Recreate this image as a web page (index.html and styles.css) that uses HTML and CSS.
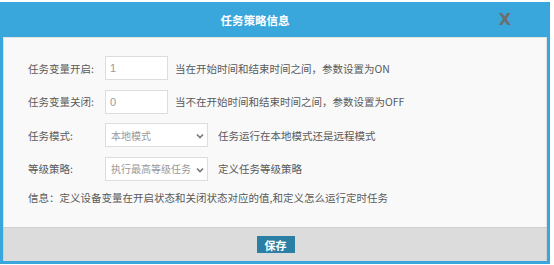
FILE: index.html
```html
<!doctype html>
<html>
    <head>
        <meta charset="utf-8">
        <meta name="viewport" content="width=device-width,initial-scale=1">
        <title>任务策略信息</title>
        <link rel="stylesheet" href="styles.css">
    </head>
    <body>
        <div class="dialog">
            <div class="dialog-head">
                <span class="dialog-title">任务策略信息</span>
                <span class="dialog-close">X</span>
            </div>
            <div class="dialog-body">
                <div class="form-row">
                    <label for="var-on">任务变量开启:</label>
                    <input type="text" id="var-on" class="field" value="1">
                    <span class="hint">当在开始时间和结束时间之间，参数设置为ON</span>
                </div>
                <div class="form-row">
                    <label for="var-off">任务变量关闭:</label>
                    <input type="text" id="var-off" class="field" value="0">
                    <span class="hint">当不在开始时间和结束时间之间，参数设置为OFF</span>
                </div>
                <div class="form-row">
                    <label for="mode">任务模式:</label>
                    <div class="select-wrap">
                        <select id="mode">
                            <option>本地模式</option>
                            <option>远程模式</option>
                        </select>
                        <svg class="chevron" width="8" height="6" viewBox="0 0 8 6"><path d="M1 1.5 L4 4.5 L7 1.5" fill="none" stroke="#777" stroke-width="1.6"/></svg>
                    </div>
                    <span class="hint">任务运行在本地模式还是远程模式</span>
                </div>
                <div class="form-row">
                    <label for="level">等级策略:</label>
                    <div class="select-wrap">
                        <select id="level">
                            <option>执行最高等级任务</option>
                        </select>
                        <svg class="chevron" width="8" height="6" viewBox="0 0 8 6"><path d="M1 1.5 L4 4.5 L7 1.5" fill="none" stroke="#777" stroke-width="1.6"/></svg>
                    </div>
                    <span class="hint">定义任务等级策略</span>
                </div>
                <p class="info">信息：定义设备变量在开启状态和关闭状态对应的值,和定义怎么运行定时任务</p>
            </div>
            <div class="dialog-foot">
                <button class="btn-save">保存</button>
            </div>
        </div>
    </body>
</html>
```

FILE: styles.css
```css
body {
    margin: 0;
    background: #fff;
    font-family: "Microsoft YaHei", "Noto Sans CJK SC", sans-serif;
    font-size: 10.5px;
    color: #5a5a5a;
}
.dialog {
    margin-top: 2px;
    width: 550px;
    height: 262px;
    box-sizing: border-box;
    border: 3px solid #3aa7dc;
    border-top: 0;
    background: #3aa7dc;
    display: flex;
    flex-direction: column;
}
.dialog-head {
    height: 35px;
    display: flex;
    align-items: center;
    justify-content: center;
    position: relative;
}
.dialog-title {
    color: #fff;
    font-weight: bold;
    font-size: 11.5px;
    margin-right: 40px;
}
.dialog-close {
    position: absolute;
    right: 36px;
    top: 8px;
    color: #6e6e6e;
    font-family: "DejaVu Sans", sans-serif;
    font-weight: bold;
    font-size: 16px;
}
.dialog-body {
    flex: 1;
    background: #f9f9f9;
    border: 1px solid #e2e2e2;
    border-bottom: 0;
    padding: 18px 0 0 24px;
}
.form-row {
    display: flex;
    align-items: center;
    height: 24px;
    margin-bottom: 9.5px;
}
.form-row label {
    width: 77px;
}
.field {
    width: 63px;
    height: 24px;
    box-sizing: border-box;
    border: 1px solid #ddd;
    background: #fff;
    padding: 0 4px;
    font-family: "Liberation Sans", sans-serif;
    font-size: 11px;
    color: #999;
    outline: none;
}
.hint {
    margin-left: 7px;
}
.select-wrap {
    position: relative;
    width: 103px;
    height: 24px;
}
.select-wrap select {
    appearance: none;
    -webkit-appearance: none;
    width: 103px;
    height: 24px;
    border: 1px solid #ddd;
    background: #fff;
    padding: 0 4px 0 5px;
    font-family: "Microsoft YaHei", "Noto Sans CJK SC", sans-serif;
    font-size: 10px;
    color: #999;
    outline: none;
}
.chevron {
    position: absolute;
    right: 4px;
    top: 10px;
}
.select-wrap + .hint {
    margin-left: 10px;
}
.info {
    margin: 7px 0 0;
}
.dialog-foot {
    height: 33px;
    background: #dcdcdc;
    border: 1px solid #cfcfcf;
    border-bottom: 0;
    display: flex;
    align-items: center;
    justify-content: center;
}
.btn-save {
    width: 38px;
    height: 17px;
    padding: 0;
    border: 0;
    background: #2b7fa4;
    color: #fff;
    font-weight: bold;
    font-size: 11px;
    font-family: "Noto Sans CJK SC", sans-serif;
    margin-left: 1px;
}
```
